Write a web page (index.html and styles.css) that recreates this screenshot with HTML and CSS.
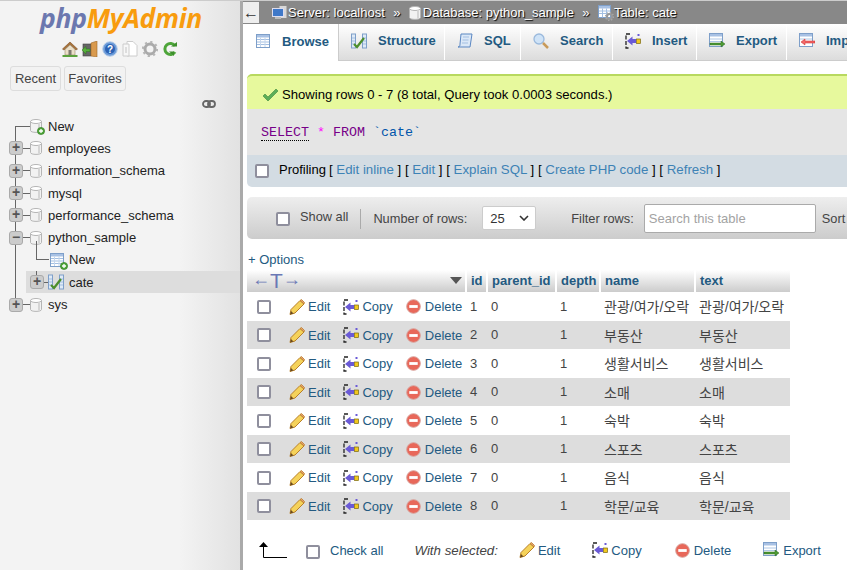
FILE: index.html
```html
<!DOCTYPE html>
<html lang="en">
<head>
    <meta charset="UTF-8">
    <title>localhost / python_sample / cate</title>
    <link rel="stylesheet" href="styles.css">
</head>
<body>
    <!-- shared icons -->
    <svg class="defs" width="0" height="0">
        <symbol id="i-home" viewBox="0 0 16 16">
            <path d="M8 1 0.500 8 2 9 8 3.500 14 9 15.500 8z" fill="#a9733a" stroke="#7a4e22" stroke-width=".6"/>
            <path d="M3 8.500 8 4l5 4.500V14H3z" fill="#eadfc8" stroke="#9a8a6a" stroke-width=".6"/>
            <rect x="6.500" y="9" width="3" height="5" fill="#7f7a70"/>
            <rect x="0.500" y="14" width="15" height="2" fill="#5aa13c"/>
        </symbol>
        <symbol id="i-exit" viewBox="0 0 16 16">
            <rect x="1" y="3" width="8" height="12" fill="#666" stroke="#444" stroke-width=".6"/>
            <path d="M9 2 15 0v16l-6-1z" fill="#d99a4e" stroke="#a06a28" stroke-width=".6"/>
            <path d="M0 9l4-3.500V8h4v2.500H4V13z" fill="#57b03c" stroke="#2f7a1c" stroke-width=".5"/>
        </symbol>
        <symbol id="i-help" viewBox="0 0 16 16">
            <circle cx="8" cy="8" r="7.300" fill="#6b9bd8" stroke="#bcd0ea"/>
            <circle cx="8" cy="8" r="5" fill="#2c62b4"/>
            <text x="8" y="11.500" class="icon-q">?</text>
        </symbol>
        <symbol id="i-docs" viewBox="0 0 16 16">
            <path d="M5 0.500h6l4 4V15H5z" fill="#fff" stroke="#ccc"/>
            <path d="M1 3h6v12H1z" fill="#f7f7f7" stroke="#ccc"/>
            <path d="M3 6h2v6H3z" fill="#ddd"/>
        </symbol>
        <symbol id="i-gear" viewBox="0 0 16 16">
            <circle cx="8" cy="8" r="5" fill="none" stroke="#aaa" stroke-width="3"/>
            <circle cx="8" cy="8" r="7" fill="none" stroke="#b5b5b5" stroke-width="2.200" stroke-dasharray="2.200 3.300"/>
        </symbol>
        <symbol id="i-reload" viewBox="0 0 16 16">
            <path d="M13 5A5.500 5.500 0 1 0 13 11" fill="none" stroke="#4ea53a" stroke-width="3"/>
            <path d="M9 5.500h6V1zM7 10.500h5V15z" fill="#3e8f2c"/>
        </symbol>
        <symbol id="i-link" viewBox="0 0 14 8">
            <rect x="1" y="1" width="7" height="6" rx="3" fill="none" stroke="#666" stroke-width="1.800"/>
            <rect x="6" y="1" width="7" height="6" rx="3" fill="none" stroke="#666" stroke-width="1.800"/>
        </symbol>
        <symbol id="i-db" viewBox="0 0 12 14">
            <path d="M0.500 2.500v9c0 2.500 11 2.500 11 0v-9z" fill="#f2f2f2" stroke="#b5b5b5"/>
            <ellipse cx="6" cy="2.500" rx="5.500" ry="2" fill="#fff" stroke="#b5b5b5"/>
            <path d="M9 4.500v8" stroke="#d5d5d5" stroke-width="2"/>
        </symbol>
        <symbol id="i-plus" viewBox="0 0 8 8">
            <circle cx="4" cy="4" r="3.600" fill="#4ea53a" stroke="#2f7a1c" stroke-width=".6"/>
            <path d="M2 4h4M4 2v4" stroke="#fff" stroke-width="1.300"/>
        </symbol>
        <symbol id="i-table" viewBox="0 0 16 16">
            <rect x="1.500" y="1.500" width="13" height="13" fill="#fff" stroke="#7e9fc9"/>
            <rect x="2" y="2" width="12" height="2.500" fill="#a8c1e4"/>
            <path d="M2 6.500h12M2 9h12M2 11.500h12" stroke="#a3bfe2"/>
            <path d="M5.500 4.500v9.500M10 4.500v9.500" stroke="#c5d6ec"/>
        </symbol>
        <symbol id="i-table-gear" viewBox="0 0 16 16">
            <rect x="0.500" y="0.500" width="12" height="12" fill="#fff" stroke="#7e9fc9"/>
            <rect x="1" y="1" width="11" height="2.500" fill="#a8c1e4"/>
            <path d="M1 6h11M1 8.500h11M4.500 3.500v9M8.500 3.500v9" stroke="#a3bfe2"/>
            <circle cx="11.500" cy="11.500" r="2.500" fill="none" stroke="#999" stroke-width="2"/>
            <circle cx="11.500" cy="11.500" r="4" fill="none" stroke="#aaa" stroke-width="1.300" stroke-dasharray="1.300 1.800"/>
        </symbol>
        <symbol id="i-struct" viewBox="0 0 16 16">
            <rect x="0.500" y="1" width="4" height="14" fill="#dfeaf6" stroke="#7e9fc9"/>
            <rect x="11.500" y="1" width="4" height="14" fill="#dfeaf6" stroke="#7e9fc9"/>
            <path d="M1 5h3M1 8h3M1 11h3M12 5h3M12 8h3M12 11h3" stroke="#a3bfe2"/>
            <path d="M3 11 6 14 13 5" fill="none" stroke="#4d8f2c" stroke-width="2.200"/>
        </symbol>
        <symbol id="i-sql" viewBox="0 0 16 16">
            <path d="M4 1h11l-2 13H1c2 0 2-2 2-3z" fill="#dbe8f7" stroke="#5b87c2"/>
            <path d="M6 4h6M5.500 7h6M5 10h6" stroke="#a3bfe2"/>
        </symbol>
        <symbol id="i-search" viewBox="0 0 16 16">
            <circle cx="6" cy="6" r="5" fill="#cfe3f7" stroke="#9ab9dc" stroke-width="1.300"/>
            <path d="M10 10l5 5" stroke="#c89a5a" stroke-width="2.500"/>
        </symbol>
        <symbol id="i-insert" viewBox="0 0 16 16">
            <path d="M5 1H1v14h4" fill="none" stroke="#222" stroke-width="1.300" stroke-dasharray="4 1.500"/>
            <path d="M2 8 7.500 3.500V6H11v4H7.500v2.500z" fill="#6a5ad6"/>
            <rect x="11.500" y="6" width="4" height="4.500" fill="#f2c81e" stroke="#7a6810" stroke-width=".7"/>
            <path d="M12.500 1h2v2h-2z" fill="#6a5ad6"/>
        </symbol>
        <symbol id="i-export" viewBox="0 0 16 16">
            <rect x="0.500" y="0.500" width="13" height="13" fill="#fff" stroke="#7e9fc9"/>
            <rect x="1" y="1" width="12" height="2.500" fill="#a8c1e4"/>
            <path d="M1 6h12M1 8.500h12" stroke="#b0c8e6"/>
            <path d="M1 10h11V8l4 3-4 3v-2H1z" fill="#4e9a34" stroke="#2f6a1c" stroke-width=".5"/>
        </symbol>
        <symbol id="i-import" viewBox="0 0 16 16">
            <rect x="0.500" y="0.500" width="13" height="13" fill="#fff" stroke="#7e9fc9"/>
            <rect x="1" y="1" width="12" height="2.500" fill="#a8c1e4"/>
            <path d="M1 6h12" stroke="#b0c8e6"/>
            <path d="M16 8H6V6L2 9l4 3v-2h10z" fill="#f26a6a" stroke="#c22" stroke-width=".5"/>
        </symbol>
        <symbol id="i-edit" viewBox="0 0 16 16">
            <path d="M2 10.500 11 1.500 15 5 6 14 1 15.500z" fill="#f5d25a" stroke="#b9802a" stroke-width="1"/>
            <path d="M11 1.500 12.500 0.500 15.500 3.500 15 5z" fill="#e8a070" stroke="#b9802a" stroke-width=".8"/>
            <path d="M1 15.500 2 12 4.500 14.500z" fill="#6a4a20"/>
        </symbol>
        <symbol id="i-delete" viewBox="0 0 16 16">
            <circle cx="8" cy="8" r="7.300" fill="#e8685a" stroke="#d8a09a"/>
            <rect x="3.500" y="6.500" width="9" height="3" fill="#fff"/>
        </symbol>
        <symbol id="i-check" viewBox="0 0 16 14">
            <path d="M1 8l2-2 3 3 8-8 2 2L6 13z" fill="#5cae58" stroke="#3f8a3c" stroke-width=".6"/>
        </symbol>
        <symbol id="i-server" viewBox="0 0 16 16">
            <rect x="7" y="0.500" width="8" height="13" fill="#d8d8d8" stroke="#8a8a8a"/>
            <rect x="0.500" y="3.500" width="11" height="8" fill="#3f78c8" stroke="#dde"/>
            <rect x="3" y="12" width="6" height="2" fill="#bbb"/>
        </symbol>
    </svg>

    <div class="nav">
        <div class="logo"><span class="logo-php">php</span><span class="logo-my">MyAdmin</span></div>
        <div class="nav-icons">
            <svg class="ic16"><use href="#i-home"/></svg>
            <svg class="ic16"><use href="#i-exit"/></svg>
            <svg class="ic16"><use href="#i-help"/></svg>
            <svg class="ic16"><use href="#i-docs"/></svg>
            <svg class="ic16"><use href="#i-gear"/></svg>
            <svg class="ic16"><use href="#i-reload"/></svg>
        </div>
        <div class="nav-btns">
            <button class="nav-btn btn-recent">Recent</button>
            <button class="nav-btn btn-fav">Favorites</button>
        </div>
        <div class="nav-link"><svg class="ic-link"><use href="#i-link"/></svg></div>

        <ul class="tree">
            <li class="node node-first">
                <span class="conn conn-wide"></span>
                <span class="db db-new"><svg class="ic-db"><use href="#i-db"/></svg><svg class="ic-plus"><use href="#i-plus"/></svg></span>
                <span>New</span>
            </li>
            <li class="node"><span class="exp">+</span><span class="conn"></span><svg class="ic-db"><use href="#i-db"/></svg><span>employees</span></li>
            <li class="node"><span class="exp">+</span><span class="conn"></span><svg class="ic-db"><use href="#i-db"/></svg><span>information_schema</span></li>
            <li class="node"><span class="exp">+</span><span class="conn"></span><svg class="ic-db"><use href="#i-db"/></svg><span>mysql</span></li>
            <li class="node"><span class="exp">+</span><span class="conn"></span><svg class="ic-db"><use href="#i-db"/></svg><span>performance_schema</span></li>
            <li class="node node-open"><span class="exp">&minus;</span><span class="conn"></span><svg class="ic-db"><use href="#i-db"/></svg><span>python_sample</span></li>
            <li class="node sub sub-new">
                <span class="sub-conn"></span>
                <span class="db db-new"><svg class="ic16"><use href="#i-table"/></svg><svg class="ic-plus"><use href="#i-plus"/></svg></span>
                <span>New</span>
            </li>
            <li class="node sub sub-sel">
                <span class="exp">+</span><span class="conn conn-short"></span>
                <svg class="ic16"><use href="#i-struct"/></svg>
                <span>cate</span>
            </li>
            <li class="node node-last"><span class="exp">+</span><span class="conn"></span><svg class="ic-db"><use href="#i-db"/></svg><span>sys</span></li>
        </ul>
    </div>

    <div class="main">
        <div class="crumbs">
            <span class="back">&larr;</span>
            <span class="crumb crumb-server"><svg class="ic16"><use href="#i-server"/></svg>Server: localhost</span>
            <span class="sep">&raquo;</span>
            <span class="crumb crumb-db"><svg class="ic-db"><use href="#i-db"/></svg>Database: python_sample</span>
            <span class="sep">&raquo;</span>
            <span class="crumb"><svg class="ic16"><use href="#i-table-gear"/></svg>Table: cate</span>
        </div>

        <div class="tabs">
            <a class="tab tab-on t-browse"><svg class="ic16"><use href="#i-table"/></svg>Browse</a>
            <a class="tab t-struct"><svg class="ic16"><use href="#i-struct"/></svg>Structure</a>
            <a class="tab t-sql"><svg class="ic16"><use href="#i-sql"/></svg>SQL</a>
            <a class="tab t-search"><svg class="ic16"><use href="#i-search"/></svg>Search</a>
            <a class="tab t-insert"><svg class="ic16"><use href="#i-insert"/></svg>Insert</a>
            <a class="tab t-export"><svg class="ic16"><use href="#i-export"/></svg>Export</a>
            <a class="tab t-import"><svg class="ic16"><use href="#i-import"/></svg>Import</a>
        </div>

        <div class="content">
            <div class="msg"><svg class="ic-check"><use href="#i-check"/></svg>Showing rows 0 - 7 (8 total, Query took 0.0003 seconds.)</div>
            <div class="sql-box"><code class="sql"><span class="kw kw-doc">SELECT</span> <span class="star">*</span> <span class="kw">FROM</span> <span class="tick">`cate`</span></code></div>
            <div class="prof">
                <input type="checkbox" class="cb">
                <span class="prof-label">Profiling</span>
                <span class="prof-links">[ <a>Edit inline</a> ] [ <a>Edit</a> ] [ <a>Explain SQL</a> ] [ <a>Create PHP code</a> ] [ <a>Refresh</a> ]</span>
            </div>

            <div class="bar">
                <input type="checkbox" class="cb">
                <span class="bar-all">Show all</span>
                <span class="bar-sep"></span>
                <span class="bar-rows">Number of rows:</span>
                <span class="select">25<svg class="chev" viewBox="0 0 10 6"><path d="M1 1l4 4 4-4" fill="none" stroke="#333" stroke-width="1.600"/></svg></span>
                <span class="bar-filter">Filter rows:</span>
                <span class="search">Search this table</span>
                <span>Sort by key:</span>
            </div>

            <div class="opts"><a>+ Options</a></div>

            <table class="data">
                <colgroup>
                    <col class="c-act"><col class="c-id"><col class="c-pid"><col class="c-depth"><col class="c-name"><col class="c-text">
                </colgroup>
                <thead>
                    <tr>
                        <th class="th-act"><span class="arrows"><span class="arr">&larr;</span><span class="tee">T</span><span class="arr">&rarr;</span></span><span class="tri"></span></th>
                        <th>id</th><th>parent_id</th><th>depth</th><th>name</th><th>text</th>
                    </tr>
                </thead>
                <tbody>
                    <tr>
                        <td class="acts"><input type="checkbox" class="cb"><a class="act a-edit"><svg class="ic16"><use href="#i-edit"/></svg>Edit</a><a class="act a-copy"><svg class="ic16"><use href="#i-insert"/></svg>Copy</a><a class="act a-del"><svg class="ic15"><use href="#i-delete"/></svg>Delete</a></td>
                        <td>1</td><td>0</td><td>1</td><td class="ko">관광/여가/오락</td><td class="ko">관광/여가/오락</td>
                    </tr>
                    <tr>
                        <td class="acts"><input type="checkbox" class="cb"><a class="act a-edit"><svg class="ic16"><use href="#i-edit"/></svg>Edit</a><a class="act a-copy"><svg class="ic16"><use href="#i-insert"/></svg>Copy</a><a class="act a-del"><svg class="ic15"><use href="#i-delete"/></svg>Delete</a></td>
                        <td>2</td><td>0</td><td>1</td><td class="ko">부동산</td><td class="ko">부동산</td>
                    </tr>
                    <tr>
                        <td class="acts"><input type="checkbox" class="cb"><a class="act a-edit"><svg class="ic16"><use href="#i-edit"/></svg>Edit</a><a class="act a-copy"><svg class="ic16"><use href="#i-insert"/></svg>Copy</a><a class="act a-del"><svg class="ic15"><use href="#i-delete"/></svg>Delete</a></td>
                        <td>3</td><td>0</td><td>1</td><td class="ko">생활서비스</td><td class="ko">생활서비스</td>
                    </tr>
                    <tr>
                        <td class="acts"><input type="checkbox" class="cb"><a class="act a-edit"><svg class="ic16"><use href="#i-edit"/></svg>Edit</a><a class="act a-copy"><svg class="ic16"><use href="#i-insert"/></svg>Copy</a><a class="act a-del"><svg class="ic15"><use href="#i-delete"/></svg>Delete</a></td>
                        <td>4</td><td>0</td><td>1</td><td class="ko">소매</td><td class="ko">소매</td>
                    </tr>
                    <tr>
                        <td class="acts"><input type="checkbox" class="cb"><a class="act a-edit"><svg class="ic16"><use href="#i-edit"/></svg>Edit</a><a class="act a-copy"><svg class="ic16"><use href="#i-insert"/></svg>Copy</a><a class="act a-del"><svg class="ic15"><use href="#i-delete"/></svg>Delete</a></td>
                        <td>5</td><td>0</td><td>1</td><td class="ko">숙박</td><td class="ko">숙박</td>
                    </tr>
                    <tr>
                        <td class="acts"><input type="checkbox" class="cb"><a class="act a-edit"><svg class="ic16"><use href="#i-edit"/></svg>Edit</a><a class="act a-copy"><svg class="ic16"><use href="#i-insert"/></svg>Copy</a><a class="act a-del"><svg class="ic15"><use href="#i-delete"/></svg>Delete</a></td>
                        <td>6</td><td>0</td><td>1</td><td class="ko">스포츠</td><td class="ko">스포츠</td>
                    </tr>
                    <tr>
                        <td class="acts"><input type="checkbox" class="cb"><a class="act a-edit"><svg class="ic16"><use href="#i-edit"/></svg>Edit</a><a class="act a-copy"><svg class="ic16"><use href="#i-insert"/></svg>Copy</a><a class="act a-del"><svg class="ic15"><use href="#i-delete"/></svg>Delete</a></td>
                        <td>7</td><td>0</td><td>1</td><td class="ko">음식</td><td class="ko">음식</td>
                    </tr>
                    <tr>
                        <td class="acts"><input type="checkbox" class="cb"><a class="act a-edit"><svg class="ic16"><use href="#i-edit"/></svg>Edit</a><a class="act a-copy"><svg class="ic16"><use href="#i-insert"/></svg>Copy</a><a class="act a-del"><svg class="ic15"><use href="#i-delete"/></svg>Delete</a></td>
                        <td>8</td><td>0</td><td>1</td><td class="ko">학문/교육</td><td class="ko">학문/교육</td>
                    </tr>
                </tbody>
            </table>

            <div class="foot">
                <svg class="foot-arrow" viewBox="0 0 28 16"><path d="M4.500 4V15.500H28" stroke="#000" stroke-width="1" fill="none"/><path d="M4.500 0 0 5h9z" fill="#000"/></svg>
                <input type="checkbox" class="cb">
                <a class="foot-all">Check all</a>
                <em class="foot-with">With selected:</em>
                <a class="act f-edit"><svg class="ic16"><use href="#i-edit"/></svg>Edit</a>
                <a class="act f-copy"><svg class="ic16"><use href="#i-insert"/></svg>Copy</a>
                <a class="act f-del"><svg class="ic15"><use href="#i-delete"/></svg>Delete</a>
                <a class="act f-exp"><svg class="ic16"><use href="#i-export"/></svg>Export</a>
            </div>
        </div>
    </div>
</body>
</html>
```

FILE: styles.css
```css
*{
    box-sizing: border-box;
}
html, body{
    height: 100%;
}
body{
    margin: 0;
    display: flex;
    overflow: hidden;
    border-top: 1px solid #ccc;
    background: #fff;
    color: #444;
    font-family: "Liberation Sans", "Noto Sans CJK KR", sans-serif;
    font-size: 13px;
}
a{
    color: #235a81;
}
svg{
    flex: none;
}
.defs{
    position: absolute;
}
.icon-q{
    fill: #fff;
    font: bold 10px "Liberation Sans", sans-serif;
    text-anchor: middle;
}
.ic16{
    width: 16px;
    height: 16px;
}
.ic15{
    width: 15px;
    height: 15px;
}
.ic-db{
    width: 12px;
    height: 14px;
}
.ic-plus{
    position: absolute;
    right: -3px;
    bottom: -2px;
    width: 8px;
    height: 8px;
}

/* left navigation */
.nav{
    flex: none;
    width: 243px;
    border-right: 3px solid #aaa;
    background: linear-gradient(to right, #f3f3f3 75%, #e2e2e2);
}
.logo{
    height: 33px;
    padding: 1px 0 0 2px;
    text-align: center;
    font-family: "Open Sans", sans-serif;
    font-size: 26.5px;
    font-weight: 700;
    font-style: italic;
    line-height: 33px;
    letter-spacing: -.3px;
}
.logo-php{
    color: #6c78af;
}
.logo-my{
    color: #f89c0e;
}
.nav-icons{
    display: flex;
    justify-content: center;
    gap: 4px;
    height: 25px;
    padding-top: 7px;
}
.nav-btns{
    display: flex;
    gap: 3px;
    padding: 7px 0 0 10px;
}
.nav-btn{
    height: 25px;
    padding: 0;
    border: 1px solid #ddd;
    border-radius: 3px;
    background: #f2f2f2;
    color: #444;
    font: 13px "Liberation Sans", sans-serif;
}
.btn-recent{
    width: 51px;
}
.btn-fav{
    width: 62px;
}
.nav-link{
    display: flex;
    justify-content: flex-end;
    height: 17px;
    padding: 9px 24px 0 0;
}
.ic-link{
    width: 14px;
    height: 8px;
}
.tree{
    margin: 7px 0 0;
    padding: 0;
    list-style: none;
}
.node{
    position: relative;
    display: flex;
    align-items: center;
    height: 22.3px;
    padding-left: 9px;
    color: #222;
}
/* vertical tree line */
.node::before{
    content: "";
    position: absolute;
    top: 0;
    bottom: 0;
    left: 15px;
    width: 1px;
    background: #666;
}
.node-first::before{
    top: 50%;
}
.node-last::before{
    bottom: 50%;
}
.exp{
    position: relative;
    z-index: 1;
    flex: none;
    width: 14px;
    height: 14px;
    border: 1px solid #aaa;
    border-radius: 3px;
    background: #ccc;
    color: #555;
    font-size: 14px;
    font-weight: bold;
    line-height: 11px;
    text-align: center;
}
.conn{
    flex: none;
    width: 7px;
    height: 1px;
    background: #666;
}
.conn-wide{
    width: 14px;
    margin-left: 7px;
}
.conn-short{
    width: 4px;
}
.node .ic-db{
    margin-right: 6px;
}
.db{
    position: relative;
    display: flex;
    margin-right: 6px;
}
.db .ic-db{
    margin-right: 0;
}
.sub{
    padding-left: 30px;
}
.sub-new::after{
    content: "";
    position: absolute;
    top: -8px;
    bottom: 50%;
    left: 36px;
    width: 1px;
    background: #666;
}
.sub-conn{
    flex: none;
    width: 13px;
    height: 1px;
    margin: 0 0 0 6px;
    background: #666;
}
.sub-new .db{
    margin-right: 4px;
}
.sub-sel{
    margin-left: 26px;
    padding-left: 4px;
    background: #ddd;
}
.sub-sel::before{
    left: -11px;
}
.sub-sel::after{
    content: "";
    position: absolute;
    top: 0;
    height: 6px;
    left: 10px;
    width: 1px;
    background: #666;
}
.sub-sel .ic16{
    margin-right: 5px;
}

/* breadcrumb */
.main{
    flex: 1;
    min-width: 0;
    overflow: hidden;
}
.crumbs{
    display: flex;
    align-items: center;
    height: 23px;
    background: #888;
    color: #fff;
    text-shadow: 1px 1px 1px #000;
    white-space: nowrap;
}
.back{
    width: 16px;
    height: 21px;
    margin-right: 13px;
    background: #eee;
    color: #333;
    font-size: 16px;
    line-height: 21px;
    text-align: center;
    text-shadow: none;
}
.crumb{
    display: flex;
    align-items: center;
}
.crumb-db .ic-db{
    margin-right: 2px;
}
.sep{
    width: 14px;
    margin: 0 5px;
    text-align: center;
}

/* tabs */
.tabs{
    display: flex;
    height: 37px;
    border-bottom: 1px solid #ccc;
    white-space: nowrap;
}
.tab{
    display: flex;
    flex: none;
    align-items: center;
    gap: 11px;
    padding: 0 8px 3px 12px;
    border-right: 1px solid #fff;
    background: linear-gradient(#fff, #dcdcdc);
    font-weight: bold;
}
.tab-on{
    border-right: 1px solid #ccc;
    background: #fff;
    height: 37px;
}
.t-browse{
    width: 96px;
}
.t-struct{
    width: 106px;
}
.t-sql{
    width: 76px;
}
.t-search{
    width: 92px;
}
.t-insert{
    width: 84px;
}
.t-export{
    width: 90px;
}

/* result panels */
.content{
    width: 900px;
    padding: 13px 0 0 4px;
}
.msg{
    display: flex;
    align-items: center;
    height: 35px;
    padding: 4px 0 0 15px;
    border-top: 2px solid #b8d95f;
    border-radius: 5px 5px 0 0;
    background: #e7f99d;
    color: #000;
    font-size: 13.1px;
}
.ic-check{
    width: 16px;
    height: 14px;
    margin-right: 4px;
}
.sql-box{
    height: 46px;
    padding: 15px 0 0 14px;
    background: #e5e5e5;
}
.sql{
    font-family: "Liberation Mono", monospace;
    font-size: 13.33px;
}
.kw{
    color: #770088;
}
.kw-doc{
    border-bottom: 1px dotted #000;
}
.star{
    color: #ff00ff;
}
.tick{
    color: #0055aa;
}
.prof{
    display: flex;
    align-items: center;
    height: 32px;
    padding: 0 0 4px 8px;
    border-radius: 0 0 5px 5px;
    background: #d3dce3;
    color: #000;
}
.prof a{
    color: #3d82b5;
}
.prof-label{
    margin: 0 3px 0 10px;
}
.prof-links{
    font-size: 13.27px;
}
.cb{
    appearance: none;
    flex: none;
    width: 14px;
    height: 14px;
    margin: 0;
    border: 2px solid #8f8f9d;
    border-radius: 2px;
    background: #fff;
}
.prof .cb{
    margin-top: 4px;
}

/* filter toolbar */
.bar{
    display: flex;
    align-items: center;
    height: 42px;
    margin-top: 10px;
    padding-left: 29px;
    border-radius: 5px;
    background: linear-gradient(#eee, #ccc);
    font-size: 12.8px;
    white-space: nowrap;
}
.bar .cb{
    margin-top: 1px;
}
.bar-all{
    margin: -4px 0 0 10px;
}
.bar-sep{
    width: 1px;
    height: 20px;
    margin: 2px 12px 0;
    background: #aaa;
}
.bar-rows{
    margin-top: 1px;
}
.select{
    display: flex;
    align-items: center;
    justify-content: space-between;
    width: 54px;
    height: 24px;
    margin: 0 35px 0 15px;
    padding: 0 6px 0 7px;
    border: 1px solid #ccc;
    border-radius: 2px;
    background: #fff;
    color: #333;
    font-size: 13px;
}
.chev{
    width: 10px;
    height: 6px;
}
.bar-filter{
    margin-right: 10px;
}
.search{
    width: 172px;
    height: 29px;
    margin-right: 6px;
    padding-left: 4px;
    border: 1px solid #aaa;
    border-radius: 2px;
    background: #fff;
    color: #a3a3a3;
    font-size: 13px;
    line-height: 27px;
}

/* options + table */
.opts{
    height: 31px;
    padding: 13px 0 0 1px;
    line-height: 16px;
}
.data{
    table-layout: fixed;
    width: 543px;
    border-collapse: collapse;
}
.c-act{
    width: 219px;
}
.c-id{
    width: 21px;
}
.c-pid{
    width: 69px;
}
.c-depth{
    width: 44px;
}
.c-name{
    width: 95px;
}
.c-text{
    width: 95px;
}
.data th{
    height: 22px;
    padding: 0 4px 2px;
    border-left: 2px solid #fff;
    background: linear-gradient(#fff, #ccc);
    color: #235a81;
    text-align: left;
    white-space: nowrap;
}
.data th:first-child{
    border-left: 0;
}
.th-act{
    position: relative;
    overflow: hidden;
}
.data th.th-act{
    padding: 0 0 0 5px;
}
.arrows{
    display: inline-flex;
    align-items: center;
    color: #6a78b5;
    font-weight: normal;
}
.arr{
    margin-bottom: 4px;
    font-size: 18px;
    line-height: 18px;
}
.tee{
    font-size: 21px;
    line-height: 20px;
}
.tri{
    position: absolute;
    top: 7px;
    right: 3px;
    border-top: 7px solid #555;
    border-left: 6px solid transparent;
    border-right: 6px solid transparent;
}
.data td{
    height: 28.5px;
    padding: 0 4px;
    white-space: nowrap;
    background: #fff;
    overflow: hidden;
}
.data td.ko{
    font-size: 14px;
}
.data tbody tr:nth-child(even) td{
    background: #ddd;
}
.data td.acts{
    padding: 0 0 0 10px;
    overflow: visible;
}
.acts > *{
    vertical-align: middle;
}
.act{
    display: inline-flex;
    align-items: center;
    gap: 3px;
}
.a-del, .f-del, .f-exp{
    gap: 4px;
}
.acts .a-edit{
    margin-left: 18px;
}
.acts .a-copy{
    margin: 0 13px;
}

/* bottom actions */
.foot{
    display: flex;
    align-items: center;
    height: 30px;
    margin-top: 15px;
    padding-left: 12px;
    white-space: nowrap;
}
.foot-arrow{
    width: 28px;
    height: 16px;
    margin-right: 19px;
    overflow: visible;
}
.foot .cb{
    margin-top: 4px;
}
.foot-all{
    margin: 0 31px 0 10px;
}
.foot-with{
    margin-right: 21px;
    font-size: 13.3px;
}
.f-edit{
    margin-right: 32px;
}
.f-copy{
    margin-right: 33px;
}
.f-del{
    margin-right: 32px;
}
```
